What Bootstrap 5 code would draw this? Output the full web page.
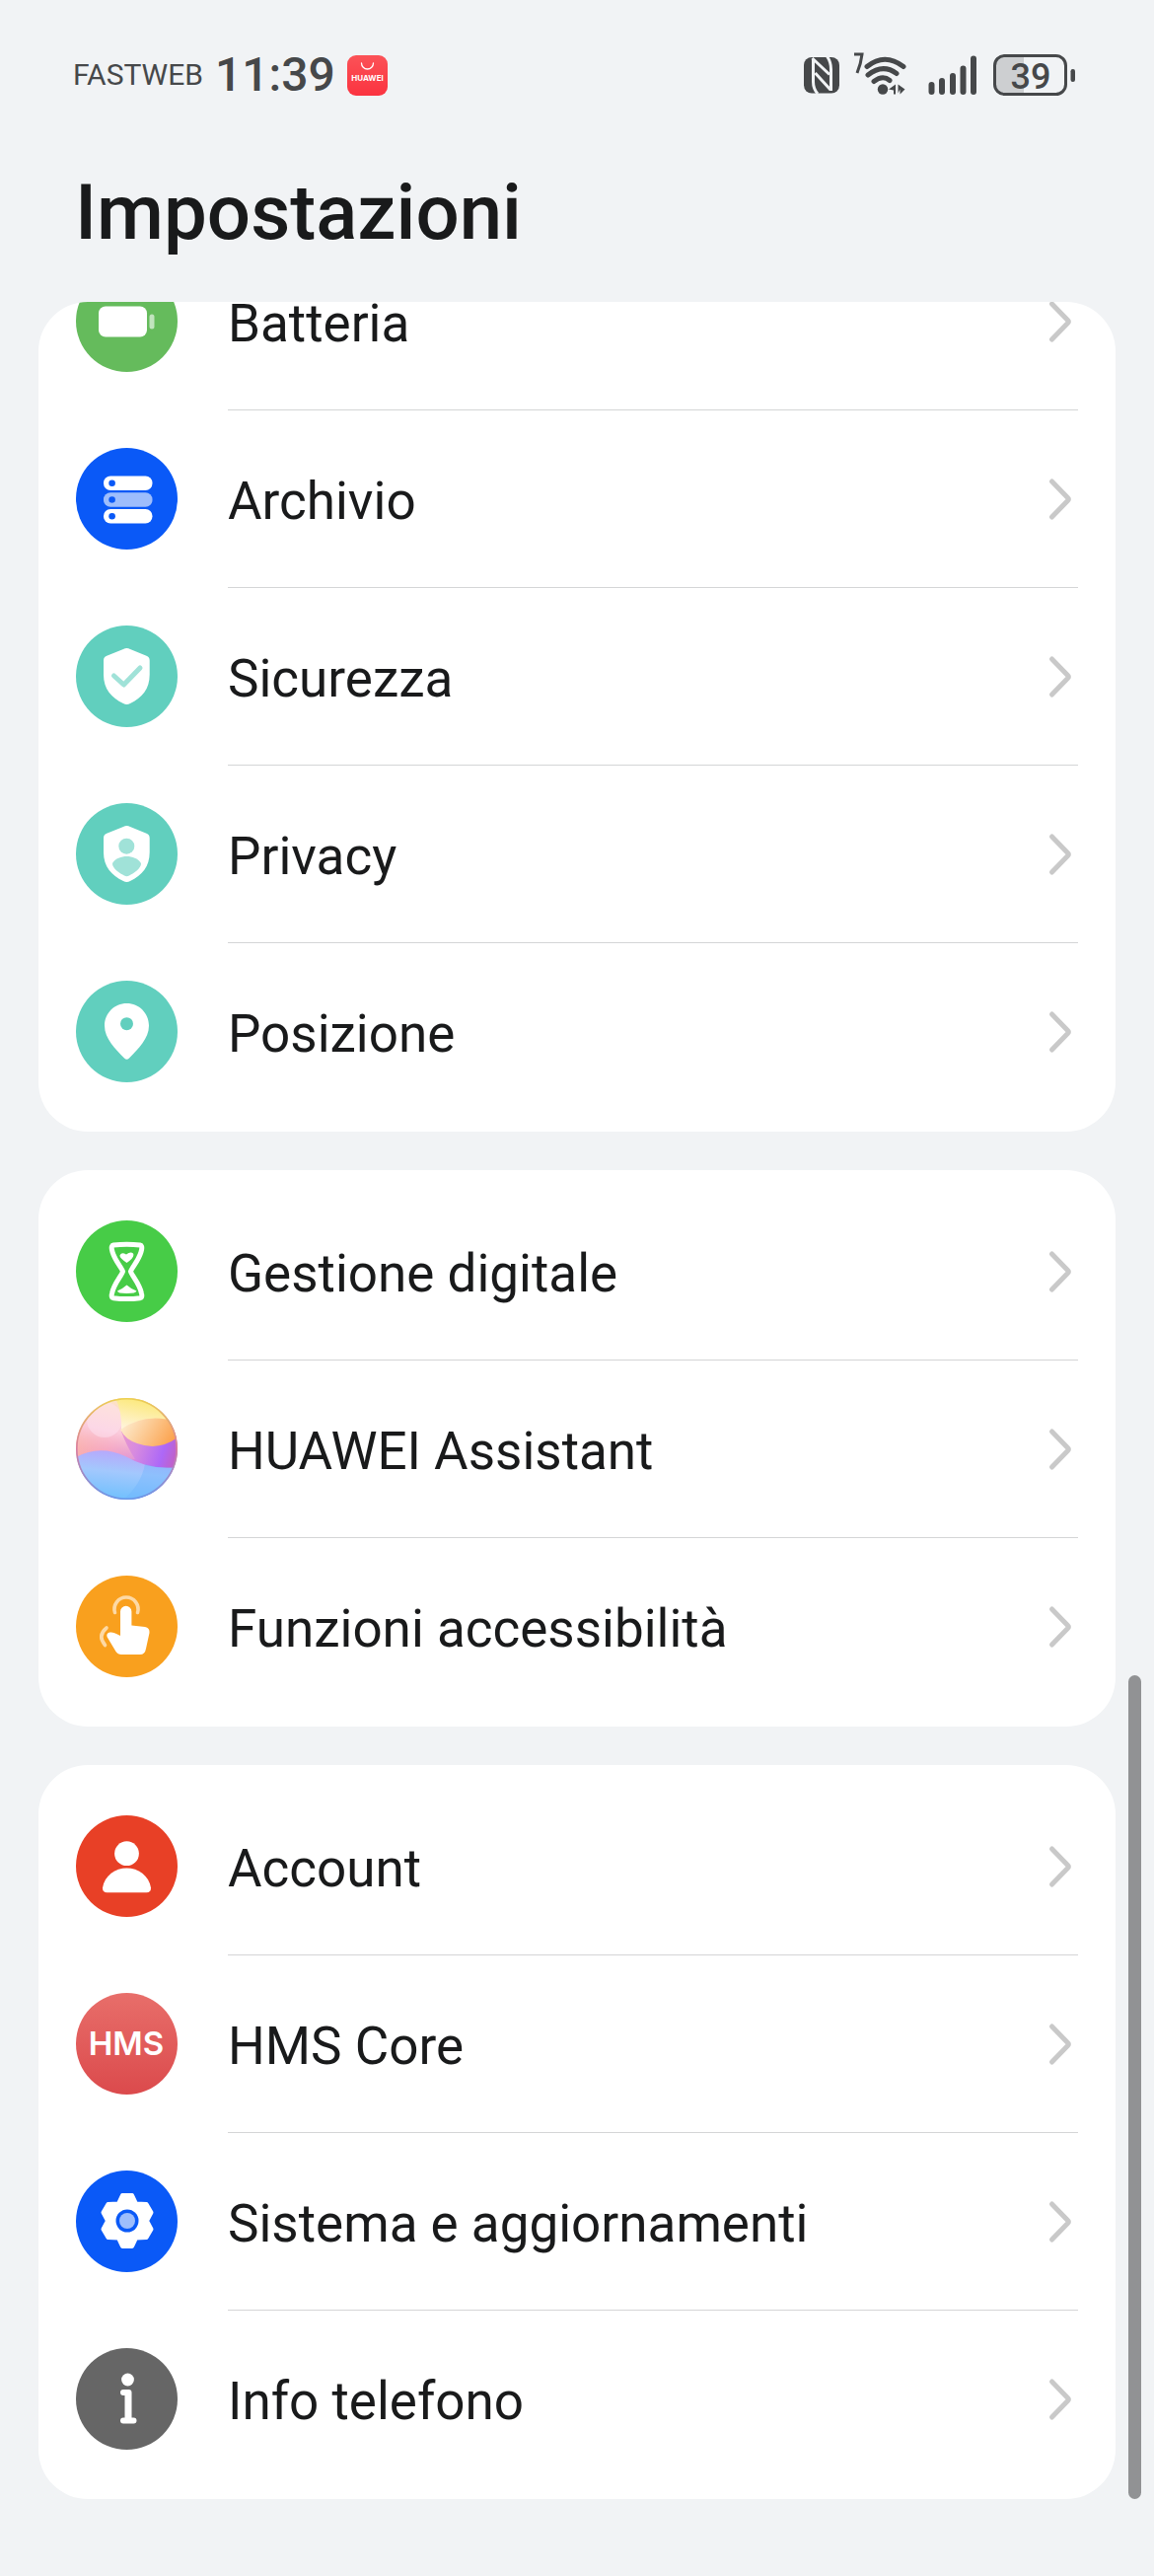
<!DOCTYPE html>
<html lang="it">
<head>
<meta charset="utf-8">
<meta name="viewport" content="width=device-width, initial-scale=1">
<title>Impostazioni</title>
<link rel="stylesheet" href="https://cdn.jsdelivr.net/npm/bootstrap@5.3.0/dist/css/bootstrap.min.css">
<style>
  body { background: #f1f3f5; color: #191a1b; font-family: Roboto, "Noto Sans", sans-serif; }
  .status { height: 152px; padding: 0 79px 0 74px; color: #46484a; line-height: 1; }
  .carrier { font-size: 30px; }
  .clock { font-size: 48px; font-weight: 500; margin: 0 12px; }
  .page-title { font-size: 78px; line-height: 128px; font-weight: 500; padding: 0 76px 26px; margin: 0; }
  .groups { padding: 0 39px; }
  .group-card { border-radius: 50px; background: #fff; padding: 12px 0; margin-bottom: 39px; overflow: hidden; }
  .group-card:last-child { margin-bottom: 0; }
  /* the first group is scrolled part of the way under the title */
  .scrolled { padding-top: 0; }
  .scrolled .list-group { margin-top: -71px; }
  .setting { height: 180px; padding: 0 38px; gap: 51px; color: inherit; background: none; }
  .setting:hover { background: #f7f8f9; }
  .setting svg { flex: none; }
  .setting-body { border-top: 1px solid transparent; padding-right: 1px; }
  .setting + .setting .setting-body { border-top-color: #d4d5d6; }
  .setting-name { font-size: 53px; line-height: 62px; padding-top: 4px; }
  .scroll-thumb { position: absolute; right: 13px; bottom: 0; width: 13px; height: 37.5%; border-radius: 7px; background: #919294; }
</style>
</head>
<body>
<svg class="d-none" aria-hidden="true">
  <symbol id="chevron" viewBox="0 0 30 44"><path d="M4.500 4 20.500 20.500Q22 22 20.500 23.500L4.500 40" fill="none" stroke="#c9c9c9" stroke-width="5" stroke-linecap="round"/></symbol>
  <symbol id="shield" viewBox="0 0 103 103"><path d="M48 24Q51.500 22 55 24L71.500 30.800Q74.700 32 74.700 35.500V50C74.700 64 67 73.500 55 79Q51.500 81 48 79C36 73.500 28 64 28 50V35.500Q28 32 31.200 30.800Z" fill="#fff"/></symbol>
</svg>

<header>
  <div class="status d-flex align-items-center justify-content-between">
    <div class="d-flex align-items-center">
      <span class="carrier">FASTWEB</span>
      <span class="clock">11:39</span>
      <svg width="41" height="41" viewBox="0 0 41 41" role="img" aria-label="AppGallery">
        <defs><linearGradient id="gal" x2="0" y2="1"><stop stop-color="#fb5257"/><stop offset="1" stop-color="#fb3340"/></linearGradient></defs>
        <rect width="41" height="41" rx="9" fill="url(#gal)"/>
        <path d="M14.500 8a6 6 0 0 0 12 0" fill="none" stroke="#fff" stroke-width="1.300" stroke-linecap="round"/>
        <text x="20.500" y="26" text-anchor="middle" font-family="Inter, sans-serif" font-weight="700" font-size="8" fill="#fff">HUAWEI</text>
      </svg>
    </div>
    <svg width="279" height="48" viewBox="812 51 279 48" fill="#46484a" role="img" aria-label="NFC, Wi-Fi, segnale, batteria 39%">
      <rect x="815" y="57" width="36" height="36.500" rx="8"/>
      <path d="M823.500 58 841 74.500M824.500 59V82Q824.500 89 829 94M826.500 73 842 90M842.500 91V69Q842.500 62 838.500 56" fill="none" stroke="#f1f3f5" stroke-width="3"/>
      <path d="M866 54h8q-1 9-5 19" fill="none" stroke="#46484a" stroke-width="3"/>
      <g fill="none" stroke="#46484a" stroke-width="5" stroke-linecap="round">
        <path d="M879 66.500Q897 52 916 66.500M880 75Q895 63 909 73.500M886 81.500Q895 74.500 902 80.500"/>
        <path d="M944.500 85v7M955 81v11M966 76v16M976.500 68.500v23.500M987 58.500v33.500" stroke-width="6"/>
      </g>
      <circle cx="895" cy="89.500" r="5.200"/>
      <path d="M901 89.500l7-5v10h-2v-4zM910.500 84.500l7 5-5 5v-5l-2 4z"/>
      <path d="M1038 56h-22q-8 0-8 8v21q0 8 8 8h22z" fill="#cdcfd1"/>
      <rect x="1008.500" y="55.500" width="72" height="39" rx="10" fill="none" stroke="#46484a" stroke-width="3"/>
      <rect x="1085.500" y="69" width="4.500" height="13" rx="2.200"/>
      <text x="1045" y="88.500" text-anchor="middle" font-family="Roboto, sans-serif" font-weight="500" font-size="36">39</text>
    </svg>
  </div>
  <h1 class="page-title">Impostazioni</h1>
</header>

<main class="groups position-relative">
  <section class="group-card scrolled">
    <div class="list-group list-group-flush">
      <a href="#batteria" class="setting d-flex align-items-center text-decoration-none">
        <svg width="103" height="103" viewBox="0 0 103 103"><circle cx="51.500" cy="51.500" r="51.500" fill="#65bb5c"/><rect x="23" y="36.500" width="49" height="31" rx="7" fill="#fff"/><rect x="74.500" y="44.500" width="5" height="15" rx="2.500" fill="#c1e4be"/></svg>
        <div class="setting-body flex-grow-1 align-self-stretch d-flex align-items-center justify-content-between"><span class="setting-name">Batteria</span><svg width="30" height="44"><use href="#chevron"/></svg></div>
      </a>
      <a href="#archivio" class="setting d-flex align-items-center text-decoration-none">
        <svg width="103" height="103" viewBox="0 0 103 103"><circle cx="51.500" cy="51.500" r="51.500" fill="#0a59f7"/><rect x="28" y="28.500" width="49.500" height="14.500" rx="7" fill="#fff"/><rect x="28" y="45.300" width="49.500" height="14.500" rx="7" fill="#9dbdfc"/><rect x="28" y="62" width="49.500" height="14.500" rx="7" fill="#fff"/><g fill="#0a59f7"><circle cx="36.600" cy="35.700" r="3.300"/><circle cx="36.600" cy="52.500" r="3.300"/><circle cx="36.600" cy="69.200" r="3.300"/></g></svg>
        <div class="setting-body flex-grow-1 align-self-stretch d-flex align-items-center justify-content-between"><span class="setting-name">Archivio</span><svg width="30" height="44"><use href="#chevron"/></svg></div>
      </a>
      <a href="#sicurezza" class="setting d-flex align-items-center text-decoration-none">
        <svg width="103" height="103" viewBox="0 0 103 103"><circle cx="51.500" cy="51.500" r="51.500" fill="#61cfbe"/><use href="#shield"/><path d="M38.500 51 48.500 60 65 43" fill="none" stroke="#a0e2d8" stroke-width="5" stroke-linecap="round" stroke-linejoin="round"/></svg>
        <div class="setting-body flex-grow-1 align-self-stretch d-flex align-items-center justify-content-between"><span class="setting-name">Sicurezza</span><svg width="30" height="44"><use href="#chevron"/></svg></div>
      </a>
      <a href="#privacy" class="setting d-flex align-items-center text-decoration-none">
        <svg width="103" height="103" viewBox="0 0 103 103"><circle cx="51.500" cy="51.500" r="51.500" fill="#61cfbe"/><use href="#shield"/><g fill="#a0e2d8"><circle cx="51.300" cy="43.700" r="8"/><path d="M37 61C40 56 46 54 51.500 54S63 56 66 61C66.500 66 58 71.500 54 73.500Q51.500 75 49 73.500C45 71.500 36.500 66 37 61Z"/></g></svg>
        <div class="setting-body flex-grow-1 align-self-stretch d-flex align-items-center justify-content-between"><span class="setting-name">Privacy</span><svg width="30" height="44"><use href="#chevron"/></svg></div>
      </a>
      <a href="#posizione" class="setting d-flex align-items-center text-decoration-none">
        <svg width="103" height="103" viewBox="0 0 103 103"><circle cx="51.500" cy="51.500" r="51.500" fill="#61cfbe"/><path d="M51.500 23C39 23 29 33 29 45.500 29 59 40 69 49 78.500Q51.500 81 54 78.500C63 69 74 59 74 45.500 74 33 64 23 51.500 23Z" fill="#fff"/><circle cx="51.500" cy="43.700" r="6.500" fill="#61cfbe"/></svg>
        <div class="setting-body flex-grow-1 align-self-stretch d-flex align-items-center justify-content-between"><span class="setting-name">Posizione</span><svg width="30" height="44"><use href="#chevron"/></svg></div>
      </a>
    </div>
  </section>

  <section class="group-card">
    <div class="list-group list-group-flush">
      <a href="#gestione" class="setting d-flex align-items-center text-decoration-none">
        <svg width="103" height="103" viewBox="0 0 103 103"><circle cx="51.500" cy="51.500" r="51.500" fill="#47cc47"/><path d="M38 25Q51.500 23.500 65 25 67.500 25.500 66.500 30C64.500 40 57 47 55.500 51.800 57 56.500 64.500 64 66.500 74Q67.500 78 65 78.700 51.500 80.500 38 78.700 35.500 78 36.500 74C38.500 64 46 56.500 47.500 51.800 46 47 38.500 40 36.500 30Q35.500 25.500 38 25Z" fill="none" stroke="#fff" stroke-width="5"/><path d="M51.500 43Q44 38 44.500 35.500 46 31.500 51 34.500 55.500 31 58 33.500 60 37 51.500 43ZM42 71.500Q47 69.500 51.500 65.500 56 69.500 61.500 71.500 61 74 51.500 74 42 74 42 71.500Z" fill="#fff"/></svg>
        <div class="setting-body flex-grow-1 align-self-stretch d-flex align-items-center justify-content-between"><span class="setting-name">Gestione digitale</span><svg width="30" height="44"><use href="#chevron"/></svg></div>
      </a>
      <a href="#assistant" class="setting d-flex align-items-center text-decoration-none">
        <svg width="103" height="103" viewBox="0 0 103 103">
          <defs>
            <clipPath id="orb"><circle cx="51.500" cy="51.500" r="51.500"/></clipPath>
            <linearGradient id="mid" x1="0" x2="1" y1=".3" y2=".6"><stop stop-color="#fbb4a8"/><stop offset=".35" stop-color="#f29cc4"/><stop offset=".6" stop-color="#d68ae0"/><stop offset=".85" stop-color="#ad68f7"/><stop offset="1" stop-color="#c45fc0"/></linearGradient>
            <linearGradient id="blush" x1=".3" x2=".5" y1="1" y2="0"><stop stop-color="#fbb4b4" stop-opacity="0"/><stop offset=".5" stop-color="#fbcbdc"/><stop offset="1" stop-color="#fde3c4"/></linearGradient>
            <linearGradient id="sun" x1=".7" x2=".3" y1="0" y2="1"><stop stop-color="#fbe76c"/><stop offset="1" stop-color="#fff4dc"/></linearGradient>
            <linearGradient id="peach" x1="0" x2="1" y1=".3" y2=".6"><stop stop-color="#fdeccf"/><stop offset="1" stop-color="#fba14c"/></linearGradient>
            <linearGradient id="sea" x1=".6" x2=".4" y1="0" y2="1"><stop stop-color="#b9a4fb"/><stop offset=".45" stop-color="#a3c8fd"/><stop offset="1" stop-color="#6fc0fd"/></linearGradient>
            <linearGradient id="rim" x2="0" y2="1"><stop stop-color="#ecd052"/><stop offset=".5" stop-color="#d77ca0"/><stop offset="1" stop-color="#6b97e8"/></linearGradient>
          </defs>
          <g clip-path="url(#orb)">
            <rect width="103" height="103" fill="url(#mid)"/>
            <path d="M0 0H50L46 34Q52 50 60 62H0Z" fill="url(#blush)"/>
            <circle cx="29" cy="22" r="18" fill="#fde4f2" opacity=".5"/>
            <path d="M40 0H103V26Q72 16 46 33Q47 14 40 0Z" fill="url(#sun)"/>
            <path d="M45 32Q70 14 103 24V40Q84 54 62 46 50 42 45 32Z" fill="url(#peach)"/>
            <path d="M0 60Q24 47 50 59 76 74 103 70V103H0Z" fill="url(#sea)"/>
            <path d="M70 67Q66 88 48 103H103V70Q86 72 70 67Z" fill="#6db4fd" opacity=".4"/>
          </g>
          <circle cx="51.500" cy="51.500" r="50.700" fill="none" stroke="url(#rim)" stroke-width="1.600"/>
        </svg>
        <div class="setting-body flex-grow-1 align-self-stretch d-flex align-items-center justify-content-between"><span class="setting-name">HUAWEI Assistant</span><svg width="30" height="44"><use href="#chevron"/></svg></div>
      </a>
      <a href="#accessibilita" class="setting d-flex align-items-center text-decoration-none">
        <svg width="103" height="103" viewBox="0 0 103 103"><circle cx="51.500" cy="51.500" r="51.500" fill="#f9a01e"/><path d="M45 61V36.500a5.700 5.700 0 0 1 11.400 0V50.500L70 52Q75 53 74.500 58L71 74Q70 80 65 80H46Q42.500 80 40.500 77L31.500 62Q30.500 58 34.500 57.500 38 57 41 59Z" fill="#fff"/><path d="M39.500 37.500a12 12 0 1 1 23 0M31 53Q21.500 61 29.500 70.500" fill="none" stroke="#fdd9a5" stroke-width="3.600" stroke-linecap="round"/></svg>
        <div class="setting-body flex-grow-1 align-self-stretch d-flex align-items-center justify-content-between"><span class="setting-name">Funzioni accessibilità</span><svg width="30" height="44"><use href="#chevron"/></svg></div>
      </a>
    </div>
  </section>

  <section class="group-card">
    <div class="list-group list-group-flush">
      <a href="#account" class="setting d-flex align-items-center text-decoration-none">
        <svg width="103" height="103" viewBox="0 0 103 103"><circle cx="51.500" cy="51.500" r="51.500" fill="#e84026"/><circle cx="51.500" cy="38.700" r="12.400" fill="#fff"/><path d="M27 73.500C29 61 40 53.500 51.500 53.500S74 61 76 73.500Q76 78.300 71.500 78.300H31.500Q27 78.300 27 73.500Z" fill="#fff"/></svg>
        <div class="setting-body flex-grow-1 align-self-stretch d-flex align-items-center justify-content-between"><span class="setting-name">Account</span><svg width="30" height="44"><use href="#chevron"/></svg></div>
      </a>
      <a href="#hms" class="setting d-flex align-items-center text-decoration-none">
        <svg width="103" height="103" viewBox="0 0 103 103"><defs><linearGradient id="hmsbg" x2="0" y2="1"><stop stop-color="#e86e6a"/><stop offset="1" stop-color="#db4a4c"/></linearGradient></defs><circle cx="51.500" cy="51.500" r="51.500" fill="url(#hmsbg)"/><text x="51" y="63" text-anchor="middle" font-family="Inter, sans-serif" font-weight="600" font-size="33" fill="#fff">HMS</text></svg>
        <div class="setting-body flex-grow-1 align-self-stretch d-flex align-items-center justify-content-between"><span class="setting-name">HMS Core</span><svg width="30" height="44"><use href="#chevron"/></svg></div>
      </a>
      <a href="#sistema" class="setting d-flex align-items-center text-decoration-none">
        <svg width="103" height="103" viewBox="0 0 103 103"><circle cx="51.500" cy="51.500" r="51.500" fill="#0a59f7"/><path d="M47 25H57L61 33.500 71.500 34 76.500 42.500 72 51 76.500 59.500 71.500 68 61 68.500 57 77H47L43 68.500 32.500 68 27.500 59.500 32 51 27.500 42.500 32.500 34 43 33.500Z" fill="#fff" stroke="#fff" stroke-width="4" stroke-linejoin="round"/><circle cx="52" cy="51" r="11.500" fill="#0a59f7"/><circle cx="52" cy="51" r="8" fill="#9dbdfc"/></svg>
        <div class="setting-body flex-grow-1 align-self-stretch d-flex align-items-center justify-content-between"><span class="setting-name">Sistema e aggiornamenti</span><svg width="30" height="44"><use href="#chevron"/></svg></div>
      </a>
      <a href="#info" class="setting d-flex align-items-center text-decoration-none">
        <svg width="103" height="103" viewBox="0 0 103 103"><circle cx="51.500" cy="51.500" r="51.500" fill="#666"/><circle cx="52.500" cy="32" r="6.400" fill="#fff"/><path d="M48 45H53.500V73.500M48 73.500H58.500" fill="none" stroke="#fff" stroke-width="6" stroke-linecap="round" stroke-linejoin="round"/><path d="M51 47V72" stroke="#fff" stroke-width="3"/></svg>
        <div class="setting-body flex-grow-1 align-self-stretch d-flex align-items-center justify-content-between"><span class="setting-name">Info telefono</span><svg width="30" height="44"><use href="#chevron"/></svg></div>
      </a>
    </div>
  </section>
  <div class="scroll-thumb" aria-hidden="true"></div>
</main>
<script src="https://cdn.jsdelivr.net/npm/bootstrap@5.3.0/dist/js/bootstrap.bundle.min.js"></script>
</body>
</html>
